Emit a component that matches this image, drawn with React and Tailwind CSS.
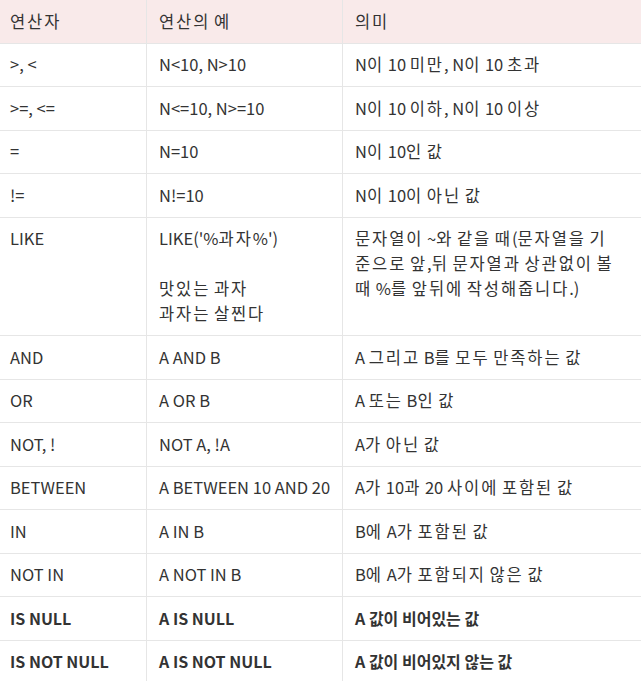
function H({ t }) {
  const parts = t.split(/([가-힣]+)/);
  return (
    <>
      {parts.map((p, i) =>
        /[가-힣]/.test(p) ? (
          <span key={i} className="tracking-[1.9px]">{p}</span>
        ) : (
          <span key={i}>{p}</span>
        )
      )}
    </>
  );
}

export default function App() {
  const rows = [
    [">, <", "N<10, N>10", "N이 10 미만, N이 10 초과"],
    [">=, <=", "N<=10, N>=10", "N이 10 이하, N이 10 이상"],
    ["=", "N=10", "N이 10인 값"],
    ["!=", "N!=10", "N이 10이 아닌 값"],
    ["LIKE", "LIKE", "LIKE"],
    ["AND", "A AND B", "A 그리고 B를 모두 만족하는 값"],
    ["OR", "A OR B", "A 또는 B인 값"],
    ["NOT, !", "NOT A, !A", "A가 아닌 값"],
    ["BETWEEN", "A BETWEEN 10 AND 20", "A가 10과 20 사이에 포함된 값"],
    ["IN", "A IN B", "B에 A가 포함된 값"],
    ["NOT IN", "A NOT IN B", "B에 A가 포함되지 않은 값"],
    ["IS NULL", "A IS NULL", "A 값이 비어있는 값", true],
    ["IS NOT NULL", "A IS NOT NULL", "A 값이 비어있지 않는 값", true],
  ];
  const td = "border border-[#e6e6e6] align-top py-[8.75px] leading-[25px]";
  return (
    <div className="w-[641px] h-[681px] overflow-hidden bg-white text-[#333] text-[16.5px]" style={{ fontFamily: '"Noto Sans CJK KR", "Noto Sans", sans-serif' }}>
      <table className="table-fixed border-collapse w-[643px] -ml-px -mt-px">
        <colgroup>
          <col className="w-[147px]" />
          <col className="w-[196px]" />
          <col />
        </colgroup>
        <thead>
          <tr className="bg-[#f9eaea] text-left">
            <th className={td + " font-normal pl-[10px]"}><H t="연산자" /></th>
            <th className={td + " font-normal px-3"}><H t="연산의 예" /></th>
            <th className={td + " font-normal px-3"}><H t="의미" /></th>
          </tr>
        </thead>
        <tbody>
          {rows.map((r, i) => (
            <tr key={i} className={r[3] ? "font-bold text-[16px]" : ""}>
              <td className={td + " pl-[10px]"}>{r[0]}</td>
              {r[0] === "LIKE" ? (
                <>
                  <td className={td + " px-3"}>
                    <div><H t="LIKE('%과자%')" /></div>
                    <div>&nbsp;</div>
                    <div><H t="맛있는 과자" /></div>
                    <div><H t="과자는 살찐다" /></div>
                  </td>
                  <td className={td + " px-3"}>
                    <div className="whitespace-nowrap"><H t="문자열이 ~와 같을 때(문자열을 기" /></div>
                    <div className="whitespace-nowrap"><H t="준으로 앞,뒤 문자열과 상관없이 볼" /></div>
                    <div className="whitespace-nowrap"><H t="때 %를 앞뒤에 작성해줍니다.)" /></div>
                  </td>
                </>
              ) : (
                <>
                  <td className={td + " px-3 whitespace-nowrap"}>{r[1]}</td>
                  <td className={td + " px-3 whitespace-nowrap"}>{r[3] ? r[2] : <H t={r[2]} />}</td>
                </>
              )}
            </tr>
          ))}
        </tbody>
      </table>
    </div>
  );
}
